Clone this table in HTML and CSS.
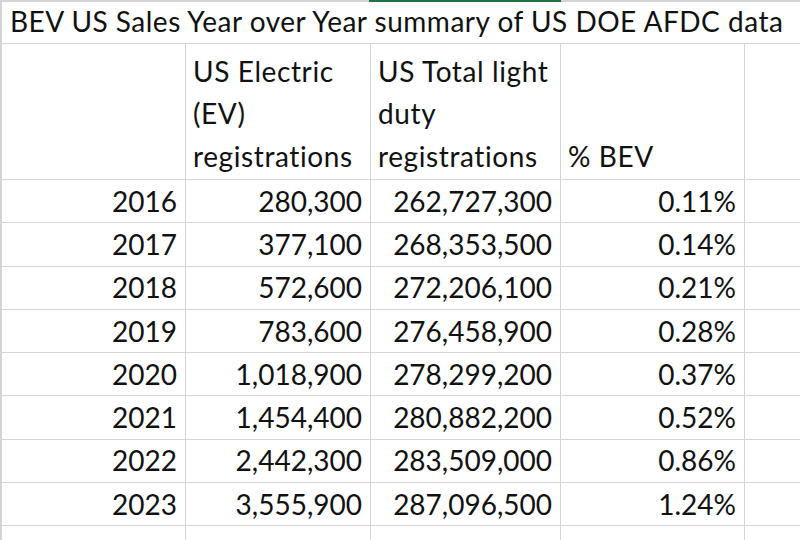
FILE: index.html
```html
<!DOCTYPE html>
<html>
<head>
<meta charset="utf-8">
<link rel="stylesheet" href="styles.css">
</head>
<body>
<div class="colbar">
  <div class="seg seg-a"></div>
  <div class="seg seg-sel"></div>
  <div class="seg seg-rest"></div>
</div>
<div class="sheet">
  <div class="cell title">BEV US Sales Year over Year summary of US DOE AFDC data</div>

  <div class="cell head"></div>
  <div class="cell head">US Electric<br>(EV)<br>registrations</div>
  <div class="cell head">US Total light<br>duty<br>registrations</div>
  <div class="cell head">% BEV</div>
  <div class="cell head last"></div>

  <div class="cell num">2016</div><div class="cell num">280,300</div><div class="cell num">262,727,300</div><div class="cell num">0.11%</div><div class="cell last"></div>
  <div class="cell num">2017</div><div class="cell num">377,100</div><div class="cell num">268,353,500</div><div class="cell num">0.14%</div><div class="cell last"></div>
  <div class="cell num">2018</div><div class="cell num">572,600</div><div class="cell num">272,206,100</div><div class="cell num">0.21%</div><div class="cell last"></div>
  <div class="cell num">2019</div><div class="cell num">783,600</div><div class="cell num">276,458,900</div><div class="cell num">0.28%</div><div class="cell last"></div>
  <div class="cell num">2020</div><div class="cell num">1,018,900</div><div class="cell num">278,299,200</div><div class="cell num">0.37%</div><div class="cell last"></div>
  <div class="cell num">2021</div><div class="cell num">1,454,400</div><div class="cell num">280,882,200</div><div class="cell num">0.52%</div><div class="cell last"></div>
  <div class="cell num">2022</div><div class="cell num">2,442,300</div><div class="cell num">283,509,000</div><div class="cell num">0.86%</div><div class="cell last"></div>
  <div class="cell num">2023</div><div class="cell num">3,555,900</div><div class="cell num">287,096,500</div><div class="cell num">1.24%</div><div class="cell last"></div>
  <div class="cell"></div><div class="cell"></div><div class="cell"></div><div class="cell"></div><div class="cell last"></div>
</div>
</body>
</html>
```

FILE: styles.css
```css
html, body {
  margin: 0;
  padding: 0;
  background: #ffffff;
  overflow: hidden;
}
body {
  width: 800px;
  height: 540px;
  font-family: "Lato", "Liberation Sans", sans-serif;
  color: #111111;
}
.colbar {
  display: flex;
  height: 2px;
}
.seg { height: 2px; }
.seg-a { width: 369px; background: #d4d4d4; }
.seg-sel { width: 192px; background: #217346; }
.seg-rest { flex: 1; background: #d4d4d4; }

.sheet {
  display: grid;
  grid-template-columns: 184px 185px 190px 184px 1fr;
  grid-template-rows: 42px 136px repeat(9, 43.25px);
  border-left: 2px solid #d4d4d4;
}
.cell {
  box-sizing: border-box;
  border-right: 1px solid #d4d4d4;
  border-bottom: 1px solid #d4d4d4;
  font-size: 28px;
  line-height: 42.5px;
  white-space: nowrap;
  display: flex;
  align-items: flex-end;
}
.cell.last { border-right: none; }
.title {
  grid-column: 1 / -1;
  border-right: none;
  padding-left: 8px;
  padding-bottom: 1px;
  letter-spacing: 0.5px;
}
.head {
  padding-left: 7px;
  padding-bottom: 2px;
  letter-spacing: 0.6px;
}
.num {
  justify-content: flex-end;
  padding-right: 8px;
}
```
